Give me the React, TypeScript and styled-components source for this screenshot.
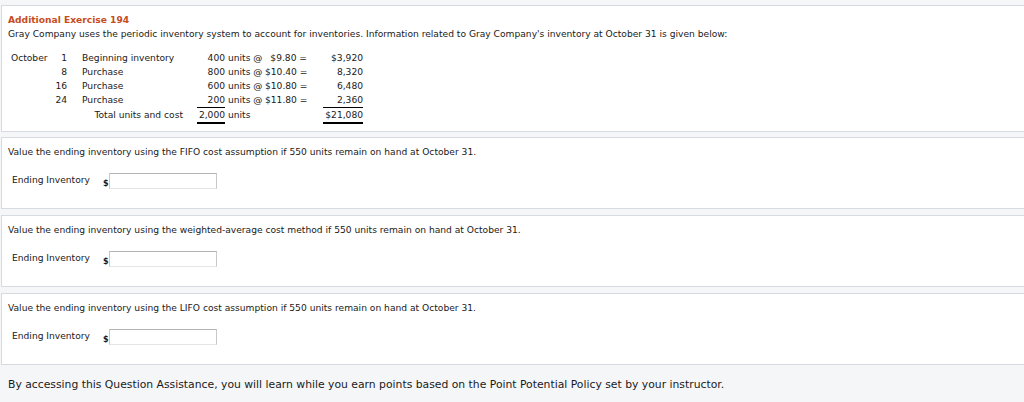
import React from "react";
import styled, { createGlobalStyle } from "styled-components";

const Global = createGlobalStyle`
  html, body { margin: 0; padding: 0; background: #f5f6f8; }
  body { font-family: "DejaVu Sans", Verdana, sans-serif; font-size: 9.15px; color: #1a1a1a; }
  * { box-sizing: border-box; }
`;

const Page = styled.div`
  padding-top: 5px;
  display: flex;
  flex-direction: column;
`;

const Panel = styled.section<{ $gap: number; $bottom: number }>`
  background: #fff;
  border: 1px solid #d6dbe1;
  border-right: none;
  margin-left: 1px;
  margin-bottom: ${(p) => p.$gap}px;
  padding: 7px 6px ${(p) => p.$bottom}px 6px;
`;

const Title = styled.div`
  font-weight: bold;
  color: #c64d1d;
  line-height: 14px;
`;

const Line = styled.div`
  line-height: 14px;
  white-space: nowrap;
`;

const Table = styled.div`
  margin-top: 10px;
  margin-left: 3px;
  display: grid;
  grid-template-columns: 41px 15px 15px 115px 28px 40px 42px 16px 40px;
  line-height: 14px;
  white-space: nowrap;
`;

const Cell = styled.div<{ $align?: "left" | "right"; $rule?: "single" | "double" }>`
  text-align: ${(p) => p.$align ?? "left"};
  height: ${(p) => (p.$rule === "double" ? 16 : p.$rule === "single" ? 15 : 14)}px;
  border-bottom: ${(p) =>
    p.$rule === "double" ? "2px solid #000" : p.$rule === "single" ? "1px solid #000" : "none"};
`;

const TotalLabel = styled.div`
  grid-column: 1 / 5;
  text-align: right;
  padding-right: 14px;
`;

const AtCell = styled.div`
  padding-left: 3px;
`;

const Question = styled.div`
  line-height: 14px;
  white-space: nowrap;
`;

const AnswerRow = styled.div`
  margin-top: 14px;
  display: flex;
  align-items: flex-start;
`;

const Label = styled.div`
  margin-left: 4px;
  width: 91px;
  line-height: 14px;
`;

const Dollar = styled.span`
  margin-top: 6px;
  width: 6px;
  font-size: 8px;
  font-weight: bold;
  line-height: 10px;
`;

const Input = styled.input`
  width: 108px;
  height: 16px;
  border: 1px solid #c9c9c9;
  border-top-color: #b4b4b4;
  border-bottom-color: #e4e4e4;
  padding: 0 3px;
  font: inherit;
  background: #fff;
  outline: none;
`;

const Footer = styled.div`
  padding: 12px 8px 0 8px;
  font-size: 10.8px;
  line-height: 16px;
  white-space: nowrap;
`;

type Row = { month?: string; day: string; desc: string; units: string; price: string; amount: string; last?: boolean };

const rows: Row[] = [
  { month: "October", day: "1", desc: "Beginning inventory", units: "400", price: "$9.80 =", amount: "$3,920" },
  { day: "8", desc: "Purchase", units: "800", price: "$10.40 =", amount: "8,320" },
  { day: "16", desc: "Purchase", units: "600", price: "$10.80 =", amount: "6,480" },
  { day: "24", desc: "Purchase", units: "200", price: "$11.80 =", amount: "2,360", last: true },
];

const questions = [
  { text: "Value the ending inventory using the FIFO cost assumption if 550 units remain on hand at October 31.", gap: 6 },
  { text: "Value the ending inventory using the weighted-average cost method if 550 units remain on hand at October 31.", gap: 6 },
  { text: "Value the ending inventory using the LIFO cost assumption if 550 units remain on hand at October 31.", gap: 0 },
];

export default function App() {
  return (
    <>
      <Global />
      <Page>
        <Panel $gap={5} $bottom={7}>
          <Title>Additional Exercise 194</Title>
          <Line>
            Gray Company uses the periodic inventory system to account for inventories. Information related to Gray
            Company's inventory at October 31 is given below:
          </Line>
          <Table>
            {rows.map((r, i) => (
              <React.Fragment key={i}>
                <Cell>{r.month ?? ""}</Cell>
                <Cell $align="right">{r.day}</Cell>
                <Cell />
                <Cell>{r.desc}</Cell>
                <Cell $align="right" $rule={r.last ? "single" : undefined}>{r.units}</Cell>
                <AtCell>units @</AtCell>
                <Cell $align="right">{r.price}</Cell>
                <Cell />
                <Cell $align="right" $rule={r.last ? "single" : undefined}>{r.amount}</Cell>
              </React.Fragment>
            ))}
            <TotalLabel>Total units and cost</TotalLabel>
            <Cell $align="right" $rule="double">2,000</Cell>
            <AtCell>units</AtCell>
            <Cell />
            <Cell />
            <Cell $align="right" $rule="double">$21,080</Cell>
          </Table>
        </Panel>
        {questions.map((q, i) => (
          <Panel key={i} $gap={q.gap} $bottom={19}>
            <Question>{q.text}</Question>
            <AnswerRow>
              <Label>Ending Inventory</Label>
              <Dollar>$</Dollar>
              <Input type="text" aria-label="Ending Inventory" />
            </AnswerRow>
          </Panel>
        ))}
        <Footer>
          By accessing this Question Assistance, you will learn while you earn points based on the Point Potential Policy
          set by your instructor.
        </Footer>
      </Page>
    </>
  );
}
